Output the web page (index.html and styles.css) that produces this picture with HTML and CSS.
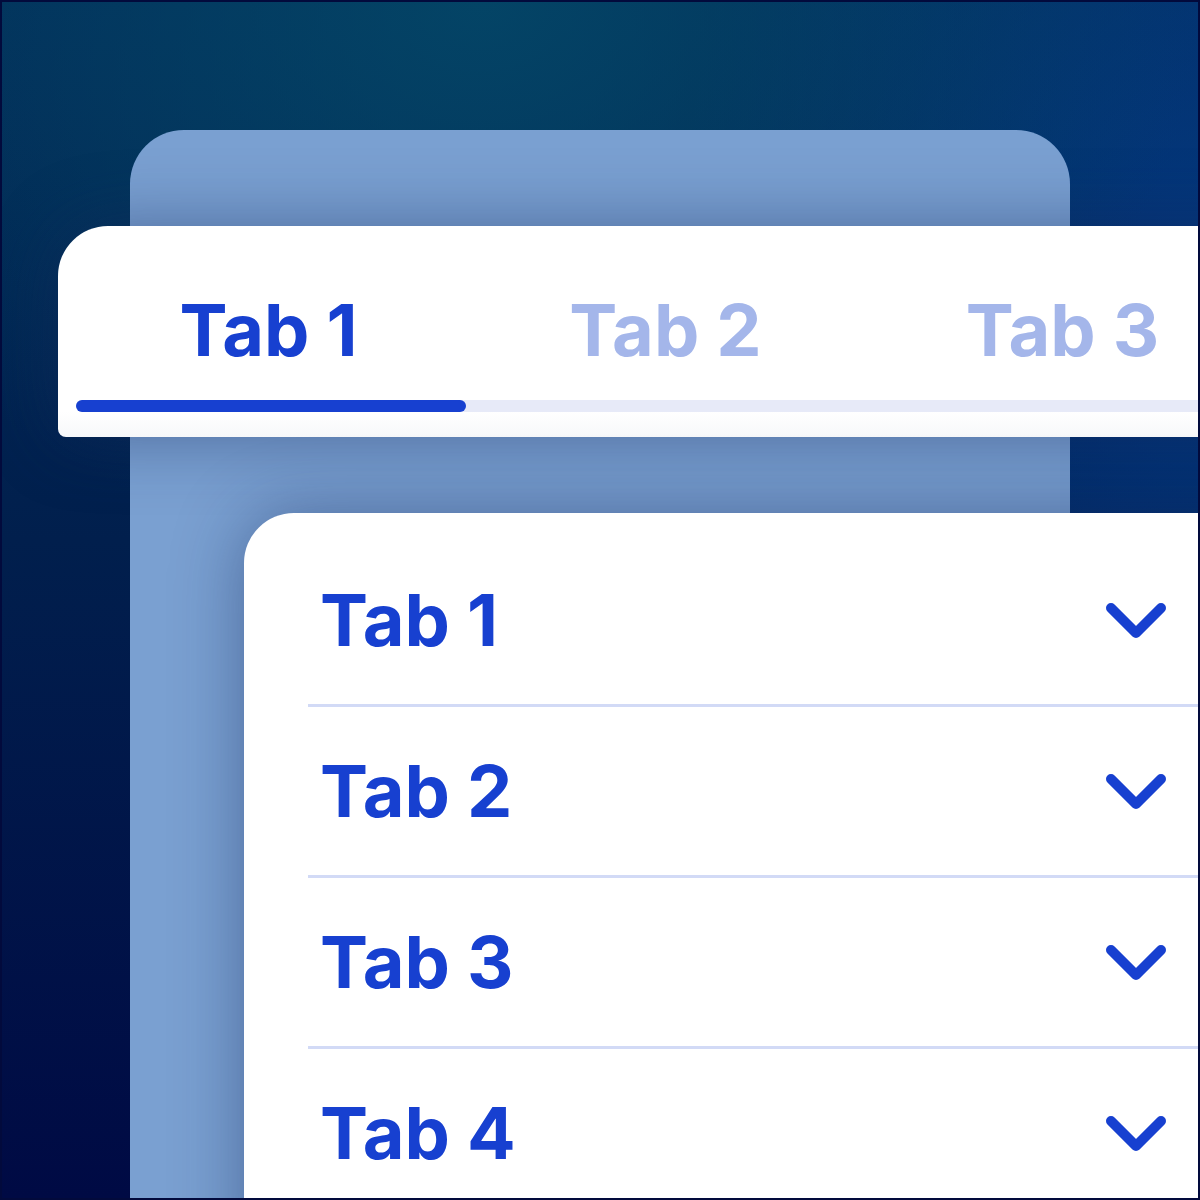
FILE: index.html
```html
<!DOCTYPE html>
<html lang="en">
<head>
<meta charset="utf-8">
<title>Tabs and accordion</title>
<link rel="stylesheet" href="styles.css">
</head>
<body>
<div class="frame">
  <div class="scene">
    <div class="panel"></div>

    <div class="tab-card">
      <div class="tabs">
        <div class="tab tab-active">Tab 1</div>
        <div class="tab">Tab 2</div>
        <div class="tab">Tab 3</div>
      </div>
      <div class="track"><div class="indicator"></div></div>
    </div>

    <div class="acc-card">
      <div class="acc-item">
        <span class="acc-label">Tab 1</span>
        <svg class="chev" viewBox="0 0 70 44"><polyline points="10,10 35,35 60,10"/></svg>
      </div>
      <div class="acc-item">
        <span class="acc-label">Tab 2</span>
        <svg class="chev" viewBox="0 0 70 44"><polyline points="10,10 35,35 60,10"/></svg>
      </div>
      <div class="acc-item">
        <span class="acc-label">Tab 3</span>
        <svg class="chev" viewBox="0 0 70 44"><polyline points="10,10 35,35 60,10"/></svg>
      </div>
      <div class="acc-item">
        <span class="acc-label">Tab 4</span>
        <svg class="chev" viewBox="0 0 70 44"><polyline points="10,10 35,35 60,10"/></svg>
      </div>
    </div>
  </div>
</div>
</body>
</html>
```

FILE: styles.css
```css
html, body {
  margin: 0;
  padding: 0;
}

body {
  width: 1200px;
  height: 1200px;
  overflow: hidden;
  font-family: Inter, "Liberation Sans", sans-serif;
}

.frame {
  width: 1200px;
  height: 1200px;
  box-sizing: border-box;
  border: 2px solid #020a3c;
  overflow: hidden;
  background:
    radial-gradient(ellipse 720px 560px at 40% 0%, rgba(4, 72, 104, 0.85) 0%, rgba(4, 72, 104, 0) 100%),
    radial-gradient(ellipse 520px 820px at 100% 25%, rgba(4, 58, 134, 0.85) 0%, rgba(4, 58, 134, 0) 100%),
    linear-gradient(to bottom, #022e5a 0%, #011f4d 45%, #000a44 100%);
}

.scene {
  display: grid;
  grid-template-columns: 56px 72px 114px 826px 260px;
  grid-template-rows: 128px 96px 211px 76px 760px;
}

.panel {
  grid-column: 3 / 5;
  grid-row: 2 / 6;
  background: #7aa0d1;
  border-radius: 54px 54px 0 0;
}

.tab-card {
  grid-column: 2 / 6;
  grid-row: 3 / 4;
  z-index: 1;
  background: linear-gradient(to bottom, #ffffff 0%, #ffffff 88%, #f7f8fa 100%);
  border-radius: 50px 0 0 8px;
  box-shadow: 0 0 70px rgba(20, 40, 90, 0.45);
  padding: 65px 0 25px 18px;
  display: flex;
  flex-direction: column;
  gap: 31px;
}

.tabs {
  display: flex;
  margin-left: -6px;
}

.tab {
  width: 397px;
  flex: none;
  text-align: center;
  font-size: 72px;
  line-height: 78px;
  font-weight: 700;
  color: #a4b6ea;
}

.tab-active {
  color: #1740d0;
}

.track {
  height: 12px;
  background: #e7eaf8;
  border-radius: 6px 0 0 6px;
}

.indicator {
  width: 390px;
  height: 12px;
  background: #1740d0;
  border-radius: 6px;
}

.acc-card {
  grid-column: 4 / 6;
  grid-row: 5 / 6;
  z-index: 1;
  background: #ffffff;
  border-radius: 50px 0 0 0;
  box-shadow: 0 0 70px rgba(20, 40, 90, 0.45);
  padding-top: 23px;
  display: flex;
  flex-direction: column;
}

.acc-item {
  margin-left: 64px;
  height: 168px;
  border-bottom: 3px solid #d2daf6;
  padding: 0 0 0 12px;
  display: flex;
  align-items: center;
  width: 1000px;
}

.acc-label {
  font-size: 72px;
  line-height: 78px;
  font-weight: 700;
  color: #1740d0;
}

.chev {
  width: 70px;
  height: 44px;
  margin-left: auto;
  margin-right: 149px;
  fill: none;
  stroke: #1740d0;
  stroke-width: 10;
  stroke-linecap: round;
  stroke-linejoin: round;
}
```
